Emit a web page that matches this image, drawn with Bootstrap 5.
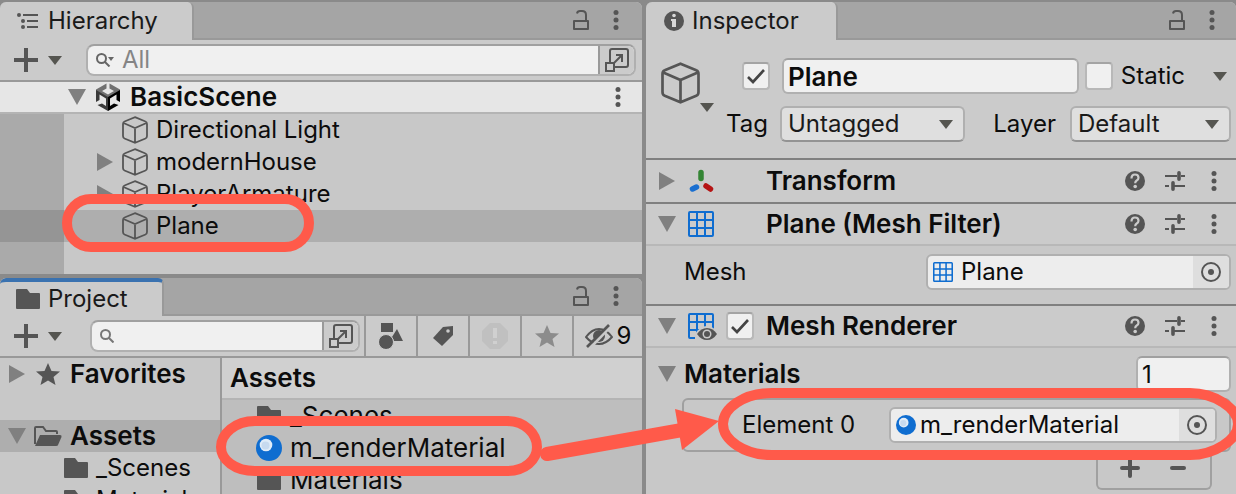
<!DOCTYPE html>
<html lang="en">
<head>
<meta charset="utf-8">
<meta name="viewport" content="width=device-width, initial-scale=1">
<title>Scene editor</title>
<link href="https://cdn.jsdelivr.net/npm/bootstrap@5.3.0/dist/css/bootstrap.min.css" rel="stylesheet">
<style>
:root { --ink:#0c0c0c; --icon:#555; --line:#999; --panel:#cbcbcb; --body:#c8c8c8; }
body { background:#8a8a8a; color:var(--ink); font-family:Inter,"Liberation Sans",sans-serif; font-size:24px; line-height:32px; }
svg { display:block; flex:none; }
button { border:0; background:none; padding:0; color:var(--icon); flex:none; }
a { color:inherit; text-decoration:none; }
h2 { font-size:24px; line-height:32px; margin:0; }
h3 { margin:0; }
h3, .strong { font-size:26px; line-height:32px; font-weight:600; }
.editor { display:grid; grid-template-columns:642fr 590fr; column-gap:4px; padding-top:2px; }
.stack { display:grid; grid-template-rows:auto minmax(0,1fr); row-gap:4px; min-height:0; min-width:0; }
.pane { background:var(--body); border-radius:6px 6px 0 0; overflow:hidden; min-width:0; }
.tabbar { height:38px; background:#a5a5a5; }
.tabbar .fill { border-bottom:2px solid var(--line); padding-right:23px; }
.tabbar .fill-insp { padding-right:21px; }
.tabbar .pane-tab { background:var(--panel); border-radius:6px 6px 0 0; border-right:2px solid var(--line); color:#1a1a1a; font-weight:400; }
.pane-tab.active-tab { border-top:4px solid #3a72b0; }
.w-hier { width:194px; padding-left:16px; }
.w-proj { width:164px; padding-left:16px; }
.w-insp { width:192px; padding-left:18px; }
.toolbar { height:42px; background:var(--panel); border-bottom:2px solid var(--line); }
.add { width:48px; margin:0 0 0 14px; }
.search { height:32px; background:#f0f0f0; border:2px solid #b0b0b0; border-top-color:#a0a0a0; border-radius:8px; overflow:hidden; min-width:0; margin:0 6px 0 24px; }
.search-proj { margin:0 4px 0 28px; }
.search input { border:0; background:none; min-width:0; width:0; outline:0; color:var(--ink); height:28px; padding:0 8px; }
.search input::placeholder { color:#858585; opacity:1; }
.search button { width:36px; height:28px; background:var(--panel); border-left:2px solid var(--line); }
.scene { height:32px; background:#e6e6e6; border-bottom:2px solid #b4b4b4; padding:0 21px 0 68px; }
.tree { background:linear-gradient(90deg,#aaa 64px,var(--body) 64px); height:160px; }
.node { height:32px; padding-left:97px; gap:8px; }
.node.selected { background:linear-gradient(90deg,#959595 64px,#aeaeae 64px); }
.twist { width:17px; }
.tool { height:40px; border-left:2px solid var(--line); width:52px; }
.tool-wide { width:70px; color:var(--ink); }
.folders { width:222px; border-right:2px solid var(--line); }
.row-line { height:32px; white-space:nowrap; }
.root-row { padding-left:8px; }
.root-open { margin-top:30px; background:#aeaeae; }
.sub-row { padding-left:64px; }
.crumb { height:42px; background:#d0d0d0; border-bottom:2px solid #b4b4b4; padding:4px 8px; }
.assets { background:#bebebe; font-size:26px; }
.assets .row-line { padding-left:34px; }
.obj-head { height:120px; background:var(--panel); border-bottom:2px solid #808080; padding:18px 5px 16px 15px; }
.obj-form { gap:12px; min-width:0; }
.name-row { padding-left:28px; }
.name-field { width:0; margin:0 6px 0 12px; }
.tag-row { padding-left:12px; }
.tag-field { margin-left:12px; }
.layer-label { margin:0 14px 0 28px; }
.layer-field { width:161px; }
.field { height:36px; border:2px solid #b0b0b0; border-radius:6px; background:#f0f0f0; padding:0 4px; color:var(--ink); min-width:0; outline:0; }
input.field { border-top-color:#a0a0a0; }
select.field { appearance:none; padding:0 6px; line-height:30px; border-bottom-color:#939393; color:#1a1a1a; background:#dfdfdf url("data:image/svg+xml,%3Csvg xmlns='http://www.w3.org/2000/svg' width='14' height='9'%3E%3Cpath fill='%23555550' d='M0 0h14L7 9z'/%3E%3C/svg%3E") no-repeat right 10px center; }
.tick { appearance:none; width:28px; height:28px; margin:0; flex:none; border:2px solid #b8b8b8; border-top-color:#a4a4a4; border-radius:4px; background:#f0f0f0; }
.tick:checked { background:#f0f0f0 url("data:image/svg+xml,%3Csvg xmlns='http://www.w3.org/2000/svg' width='24' height='24'%3E%3Cpath fill='none' stroke='%23444' stroke-width='2.6' d='M4 13l5 5L20 6'/%3E%3C/svg%3E") center no-repeat; }
.comp { height:42px; background:var(--panel); border-bottom:2px solid #b8b8b8; padding:0 13px 0 12px; }
.comp.closed { height:44px; border-color:#808080; }
.comp .icons { width:78px; }
.tools { gap:20px; }
.objfield { padding:0 0 0 5px; background:#ededed; overflow:hidden; }
.objfield button { width:36px; height:32px; background:#dedede; }
.mesh-body { height:60px; border-bottom:2px solid #808080; padding:6px 5px 12px 38px; }
.mesh-body .objfield { width:305px; }
.mats { padding:8px 5px 0 12px; }
.element { height:54px; border:2px solid #a0a0a0; border-radius:6px; margin:6px 0 0 24px; padding:0 12px 0 58px; }
.element .objfield { width:328px; }
.plusminus { width:116px; height:38px; border:2px solid #a0a0a0; border-top:0; border-radius:0 0 6px 6px; margin-right:19px; }
.count { width:95px; }
.marks { pointer-events:none; }
</style>
</head>
<body>
<svg width="0" height="0" class="position-absolute" aria-hidden="true">
 <defs>
  <symbol id="lock" viewBox="0 0 16 20"><path d="M1 11h14v8H1zM13 11V5Q13 1 9 1H7Q4.500 1 4 3.500" fill="none" stroke="#555" stroke-width="2" stroke-linejoin="round"/></symbol>
  <symbol id="dots" viewBox="0 0 6 20"><g fill="#555"><circle cx="3" cy="2.500" r="2.500"/><circle cx="3" cy="10" r="2.500"/><circle cx="3" cy="17.500" r="2.500"/></g></symbol>
  <symbol id="plus" viewBox="0 0 24 24"><path d="M12 0v24M0 12h24" stroke="#555" stroke-width="4"/></symbol>
  <symbol id="caret" viewBox="0 0 14 9"><path d="M0 0h14L7 9z" fill="#555550"/></symbol>
  <symbol id="down" viewBox="0 0 18 16"><path d="M0 0h18L9 16z" fill="#808080"/></symbol>
  <symbol id="right" viewBox="0 0 16 18"><path d="M0 0v18L16 9z" fill="#808080"/></symbol>
  <symbol id="cube" viewBox="0 0 26 28"><path d="M13 1.200 23.500 5.500Q25 6 25 8v12q0 2-1.500 2.500L13 26.800 2.500 22.500Q1 22 1 20V8q0-2 1.500-2.500zM1.500 7 13 12 24.500 7M13 12v14.500" fill="none" stroke="#555" stroke-width="1.800"/></symbol>
  <symbol id="folder" viewBox="0 0 24 20"><path d="M0 1Q0 0 1 0h10l3 4h9q1 0 1 1v14q0 1-1 1H1q-1 0-1-1z" fill="#555"/></symbol>
  <symbol id="popout" viewBox="0 0 24 24"><g fill="none" stroke="#555" stroke-width="2"><path d="M5 14V3q0-2 2-2h14q2 0 2 2v14q0 2-2 2H10"/><path d="M1 15h8v8H1zM9 15l8-8M11 7h6v7"/></g></symbol>
  <symbol id="star" viewBox="0 0 24 22"><path d="M12 0l3.500 8 8.500.5-6.500 5.500 2 8L12 17.500 4.500 22l2-8L0 8.500 8.500 8z"/></symbol>
  <symbol id="grid" viewBox="0 0 26 26"><path d="M1 2q0-1 1-1h22q1 0 1 1v22q0 1-1 1H2q-1 0-1-1zM9 1v24M17 1v24M1 9h24M1 17h24" fill="none" stroke="#0f6dd0" stroke-width="2"/></symbol>
  <symbol id="help" viewBox="0 0 20 20"><circle cx="10" cy="10" r="10" fill="#555"/><path d="M6.500 7.500q0-4 3.500-4t3.500 3.200q0 1.800-1.800 2.800Q10.200 10.300 10.200 12.200" fill="none" stroke="#cbcbcb" stroke-width="2.200"/><circle cx="10.200" cy="15.500" r="1.800" fill="#cbcbcb"/></symbol>
  <symbol id="sliders" viewBox="0 0 20 20"><path d="M0 5h12M16 5h4M0 15h4M8 15h12" stroke="#555" stroke-width="2"/><path d="M14 1.800v6.400M8 11.800v6.400" stroke="#555" stroke-width="3.600" stroke-linecap="round"/></symbol>
  <symbol id="target" viewBox="0 0 20 20"><circle cx="10" cy="10" r="9" fill="none" stroke="#555" stroke-width="2"/><circle cx="10" cy="10" r="3" fill="#555"/></symbol>
  <symbol id="ball" viewBox="0 0 26 26"><circle cx="13" cy="13" r="13" fill="#0f6dd0"/><circle cx="10" cy="10" r="6.300" fill="#e0ecf8"/><circle cx="9.500" cy="10.500" r="4" fill="#b5cfea" opacity=".6"/></symbol>
 </defs>
</svg>

<main class="editor vh-100 overflow-hidden position-relative">
 <div class="stack">
  <section class="pane">
   <div class="tabbar d-flex">
    <h2 class="pane-tab w-hier d-flex align-items-center gap-2">
     <svg width="24" height="18" viewBox="0 0 24 18"><g fill="#555"><circle cx="3" cy="3" r="2"/><circle cx="7" cy="9" r="2"/><circle cx="7" cy="15" r="2"/><path d="M7 2h15v2H7zM11 8h11v2H11zM11 14h11v2H11z"/></g></svg>Hierarchy</h2>
    <div class="fill d-flex flex-fill align-items-center justify-content-end gap-4">
     <button type="button" aria-label="Lock"><svg width="16" height="20"><use href="#lock"/></svg></button>
     <button type="button" aria-label="Menu"><svg width="6" height="20"><use href="#dots"/></svg></button>
    </div>
   </div>
   <div class="toolbar d-flex align-items-center">
    <button type="button" class="add d-flex align-items-center justify-content-between" aria-label="Create"><svg width="24" height="24"><use href="#plus"/></svg><svg width="14" height="9"><use href="#caret"/></svg></button>
    <div class="search d-flex align-items-center flex-fill ps-2">
     <svg width="18" height="14" viewBox="0 0 18 14"><g fill="none" stroke="#666" stroke-width="2"><circle cx="5.500" cy="5.500" r="4.500"/><path d="M8.500 8.500l5 5"/></g><path d="M12 4h6l-3 4z" fill="#666"/></svg>
     <input class="flex-fill" type="text" placeholder="All" aria-label="Search hierarchy">
     <button type="button" class="d-flex align-items-center justify-content-center" aria-label="Open search"><svg width="24" height="24"><use href="#popout"/></svg></button>
    </div>
   </div>
   <div class="scene d-flex align-items-center">
    <svg width="18" height="16"><use href="#down"/></svg>
    <svg class="ms-2 me-2" width="28" height="28" viewBox="0 0 28 28">
     <path d="M12.500 0.500V5.500L8 8l6 3.500 6-3.500-4.500-2.500V.5L26 6.500v2.500L14 15 2 9V6.500z" fill="#707070"/>
     <path d="M2 7v12l3.500-2v-5.500L12 15.500V23L8 20.500 3.500 22 14 28V14z" fill="#3a3a3a"/>
     <path d="M26 7v12l-3.500-2v-5.500L16 15.500V23l4-2.500 4.500 1.500L14 28V14z" fill="#000"/>
    </svg>
    <span class="strong flex-fill">BasicScene</span>
    <button type="button" aria-label="Scene menu"><svg width="6" height="20"><use href="#dots"/></svg></button>
   </div>
   <div class="tree">
    <div class="node d-flex align-items-center"><span class="twist"></span><svg width="26" height="28"><use href="#cube"/></svg>Directional Light</div>
    <div class="node d-flex align-items-center"><span class="twist"><svg width="16" height="18"><use href="#right"/></svg></span><svg width="26" height="28"><use href="#cube"/></svg>modernHouse</div>
    <div class="node d-flex align-items-center"><span class="twist"><svg width="16" height="18"><use href="#right"/></svg></span><svg width="26" height="28"><use href="#cube"/></svg>PlayerArmature</div>
    <div class="node selected d-flex align-items-center"><span class="twist"></span><svg width="26" height="28"><use href="#cube"/></svg>Plane</div>
   </div>
  </section>

  <section class="pane d-flex flex-column">
   <div class="tabbar d-flex flex-shrink-0">
    <h2 class="pane-tab active-tab w-proj d-flex align-items-center gap-2"><svg width="24" height="20"><use href="#folder"/></svg>Project</h2>
    <div class="fill d-flex flex-fill align-items-center justify-content-end gap-4">
     <button type="button" aria-label="Lock"><svg width="16" height="20"><use href="#lock"/></svg></button>
     <button type="button" aria-label="Menu"><svg width="6" height="20"><use href="#dots"/></svg></button>
    </div>
   </div>
   <div class="toolbar d-flex align-items-center flex-shrink-0">
    <button type="button" class="add d-flex align-items-center justify-content-between" aria-label="Create"><svg width="24" height="24"><use href="#plus"/></svg><svg width="14" height="9"><use href="#caret"/></svg></button>
    <div class="search search-proj d-flex align-items-center flex-fill ps-2">
     <svg width="14" height="14" viewBox="0 0 14 14"><g fill="none" stroke="#777" stroke-width="2"><circle cx="5.500" cy="5.500" r="4.500"/><path d="M8.500 8.500l5 5"/></g></svg>
     <input class="flex-fill" type="text" aria-label="Search project">
     <button type="button" class="d-flex align-items-center justify-content-center" aria-label="Open search"><svg width="24" height="24"><use href="#popout"/></svg></button>
    </div>
    <button type="button" class="tool d-flex align-items-center justify-content-center" aria-label="Filter by type"><svg width="24" height="26" viewBox="0 0 24 26"><g fill="#555"><path d="M2 0h12v9H2zM18 6l6 12h-9l-2-4z"/><circle cx="7" cy="19" r="7.500" stroke="#cbcbcb"/></g></svg></button>
    <button type="button" class="tool d-flex align-items-center justify-content-center" aria-label="Filter by label"><svg width="20" height="20" viewBox="0 0 20 20"><path d="M0 12L10 1l10-1v9L9 20z" fill="#555"/><circle cx="15" cy="5" r="1.800" fill="#cbcbcb"/></svg></button>
    <button type="button" class="tool d-flex align-items-center justify-content-center" aria-label="Import log"><svg width="26" height="26" viewBox="0 0 26 26"><path d="M8 0h10l8 8v10l-8 8H8l-8-8V8z" fill="#c0c0c0"/><path d="M13 5v10M13 18v3" stroke="#d0d0d0" stroke-width="4"/></svg></button>
    <button type="button" class="tool d-flex align-items-center justify-content-center" aria-label="Save search"><svg width="24" height="22" fill="#8c8c8c"><use href="#star"/></svg></button>
    <button type="button" class="tool tool-wide d-flex align-items-center justify-content-center gap-1" aria-label="Hidden packages"><svg width="28" height="24" viewBox="0 0 28 24"><path d="M1 13Q7 5 14 5t13 8q-6 7-13 7T1 13z" fill="none" stroke="#555" stroke-width="2"/><circle cx="14" cy="12" r="6" fill="#555"/><path d="M5 24L26 2" stroke="#cbcbcb" stroke-width="3"/><path d="M2 23L24 1" stroke="#555" stroke-width="2.600"/></svg>9</button>
   </div>
   <div class="d-flex flex-fill overflow-hidden">
    <nav class="folders flex-shrink-0">
     <a href="#" class="row-line root-row strong d-flex align-items-center gap-2"><svg width="18" height="18"><use href="#right"/></svg><svg width="28" height="22" viewBox="0 0 24 22" fill="#555"><use href="#star"/></svg>Favorites</a>
     <a href="#" class="row-line root-row root-open strong d-flex align-items-center gap-2"><svg width="18" height="16"><use href="#down"/></svg><svg width="28" height="20" viewBox="0 0 28 20"><path d="M1 18V2q0-1 1-1h7l3 4h10q1 0 1 1v2" fill="none" stroke="#555" stroke-width="2"/><path d="M6 9h20q2 0 1.500 2L24 19q0 1-2 1H1z" fill="#555"/></svg>Assets</a>
     <a href="#" class="row-line sub-row d-flex align-items-center gap-2"><svg width="24" height="20"><use href="#folder"/></svg>_Scenes</a>
     <a href="#" class="row-line sub-row d-flex align-items-center gap-2"><svg width="24" height="20"><use href="#folder"/></svg>Materials</a>
    </nav>
    <div class="assets flex-fill">
     <div class="crumb strong">Assets</div>
     <a href="#" class="row-line d-flex align-items-center gap-2"><svg width="26" height="20"><use href="#folder"/></svg>_Scenes</a>
     <a href="#" class="row-line d-flex align-items-center gap-2"><svg width="26" height="26"><use href="#ball"/></svg>m_renderMaterial</a>
     <a href="#" class="row-line d-flex align-items-center gap-2"><svg width="26" height="20"><use href="#folder"/></svg>Materials</a>
    </div>
   </div>
  </section>
 </div>

 <section class="pane">
  <div class="tabbar d-flex">
   <h2 class="pane-tab w-insp d-flex align-items-center gap-2"><svg width="20" height="20" viewBox="0 0 20 20"><circle cx="10" cy="10" r="10" fill="#555"/><circle cx="10" cy="4.500" r="1.800" fill="#d8d8d8"/><path d="M7 8h5v8H8V10H7z" fill="#d8d8d8"/></svg>Inspector</h2>
   <div class="fill fill-insp d-flex flex-fill align-items-center justify-content-end gap-4">
    <button type="button" aria-label="Lock"><svg width="16" height="20"><use href="#lock"/></svg></button>
    <button type="button" aria-label="Menu"><svg width="6" height="20"><use href="#dots"/></svg></button>
   </div>
  </div>
  <div class="obj-head d-flex">
   <button type="button" class="d-flex align-items-end align-self-start pt-1" aria-label="Object icon"><svg class="mb-2" width="39" height="42" viewBox="0 0 26 28"><use href="#cube"/></svg><svg width="14" height="9"><use href="#caret"/></svg></button>
   <div class="obj-form flex-fill d-flex flex-column">
    <div class="name-row d-flex align-items-center">
     <input class="tick" type="checkbox" checked aria-label="Active">
     <input class="field strong name-field flex-fill" type="text" value="Plane" aria-label="Name">
     <input class="tick" type="checkbox" id="static"><label for="static" class="ms-2">Static</label>
     <button type="button" class="ms-4 px-1" aria-label="Static options"><svg width="14" height="9"><use href="#caret"/></svg></button>
    </div>
    <div class="tag-row d-flex align-items-center">
     <label for="tag">Tag</label>
     <select id="tag" class="field tag-field flex-fill"><option>Untagged</option></select>
     <label for="layer" class="layer-label">Layer</label>
     <select id="layer" class="field layer-field"><option>Default</option></select>
    </div>
   </div>
  </div>

  <div class="comp closed d-flex align-items-center">
   <svg class="me-1" width="18" height="18"><use href="#right"/></svg>
   <span class="icons ms-2"><svg width="26" height="24" viewBox="0 0 26 24"><g stroke-width="5.500" stroke-linecap="round"><path d="M13 3.500v6" stroke="#348534"/><path d="M4.500 20l4-2" stroke="#1a6fd0"/><path d="M18 17l4.500 3" stroke="#b51414"/></g></svg></span>
   <h3 class="flex-fill">Transform</h3>
   <div class="tools d-flex align-items-center pe-1"><svg width="20" height="20"><use href="#help"/></svg><svg width="20" height="20"><use href="#sliders"/></svg><svg class="ms-1" width="10" height="20" viewBox="0 0 6 20"><use href="#dots"/></svg></div>
  </div>
  <div class="comp d-flex align-items-center">
   <svg class="me-1" width="18" height="16"><use href="#down"/></svg>
   <span class="icons ms-2"><svg width="26" height="26"><use href="#grid"/></svg></span>
   <h3 class="flex-fill">Plane (Mesh Filter)</h3>
   <div class="tools d-flex align-items-center pe-1"><svg width="20" height="20"><use href="#help"/></svg><svg width="20" height="20"><use href="#sliders"/></svg><svg class="ms-1" width="10" height="20" viewBox="0 0 6 20"><use href="#dots"/></svg></div>
  </div>
  <div class="mesh-body d-flex align-items-center justify-content-between">
   <span>Mesh</span>
   <div class="field objfield d-flex align-items-center gap-2"><svg width="20" height="20" viewBox="0 0 26 26"><use href="#grid"/></svg><span class="flex-fill">Plane</span><button type="button" class="d-flex align-items-center justify-content-center" aria-label="Pick mesh"><svg width="20" height="20"><use href="#target"/></svg></button></div>
  </div>
  <div class="comp d-flex align-items-center">
   <svg class="me-1" width="18" height="16"><use href="#down"/></svg>
   <span class="icons ms-2 d-flex align-items-center gap-2"><svg width="30" height="28" viewBox="0 0 30 28"><use href="#grid" width="26" height="26" y="1"/><path d="M7 22q5-8 12-8t11 8v6H7z" fill="#cbcbcb"/><path d="M9 22q4-6 10-6t10 6q-4 6-10 6T9 22z" fill="#555"/><circle cx="19" cy="22" r="4.500" fill="#cbcbcb"/><circle cx="19" cy="22" r="3" fill="#555"/></svg><input class="tick" type="checkbox" checked aria-label="Enable renderer"></span>
   <h3 class="flex-fill">Mesh Renderer</h3>
   <div class="tools d-flex align-items-center pe-1"><svg width="20" height="20"><use href="#help"/></svg><svg width="20" height="20"><use href="#sliders"/></svg><svg class="ms-1" width="10" height="20" viewBox="0 0 6 20"><use href="#dots"/></svg></div>
  </div>
  <div class="mats">
   <div class="d-flex align-items-center"><svg width="18" height="16"><use href="#down"/></svg><h3 class="flex-fill ps-2">Materials</h3><input class="field count" type="text" value="1" aria-label="Materials count"></div>
   <div class="element d-flex align-items-center justify-content-between"><span>Element 0</span>
    <div class="field objfield d-flex align-items-center gap-1"><svg width="20" height="20" viewBox="0 0 26 26"><use href="#ball"/></svg><span class="flex-fill">m_renderMaterial</span><button type="button" class="d-flex align-items-center justify-content-center" aria-label="Pick material"><svg width="20" height="20"><use href="#target"/></svg></button></div>
   </div>
   <div class="plusminus ms-auto d-flex align-items-center justify-content-around px-2 pb-1">
    <button type="button" aria-label="Add"><svg width="20" height="20" viewBox="0 0 20 20"><path d="M10 2v16M2 10h16" stroke="#555" stroke-width="4" stroke-linecap="round"/></svg></button>
    <button type="button" aria-label="Remove"><svg width="20" height="20" viewBox="0 0 20 20"><path d="M4 10h12" stroke="#555" stroke-width="4" stroke-linecap="round"/></svg></button>
   </div>
  </div>
 </section>

 <svg class="marks position-absolute top-0 start-0 w-100 h-100" viewBox="0 0 1236 494" preserveAspectRatio="xMinYMin meet" aria-hidden="true">
  <g fill="none" stroke="#ff5a4a" stroke-width="10">
   <rect x="67" y="199" width="242" height="48" rx="24"/>
   <path d="M255 421H507C525 421 537 434 537 447S525 471 507 471H255C235 471 221 460 221 447S235 421 255 421z"/>
   <path d="M772 393H1190C1214 393 1238 408 1238 424S1214 455 1190 455H772C744 455 723 440 723 424S744 393 772 393z"/>
   <path d="M547 454L682 430" stroke-width="14" stroke-linecap="round"/>
  </g>
  <path d="M719 421L675 409 682 450z" fill="#ff5a4a"/>
 </svg>
</main>
<script src="https://cdn.jsdelivr.net/npm/bootstrap@5.3.0/dist/js/bootstrap.bundle.min.js"></script>
</body>
</html>
